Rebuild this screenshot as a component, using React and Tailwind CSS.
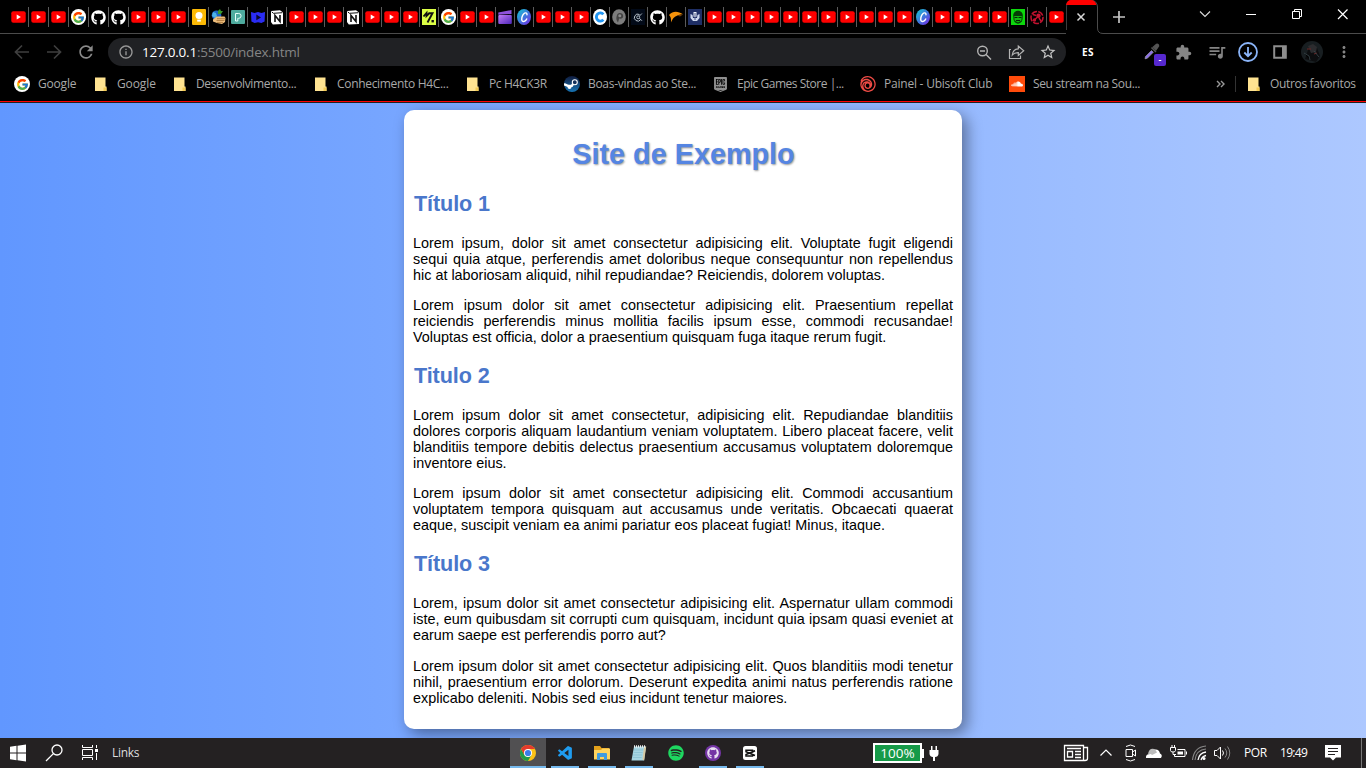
import React from "react";
import { FcGoogle } from "react-icons/fc";
import { FaGithub, FaSpotify, FaSoundcloud } from "react-icons/fa";
import { SiUbisoft, SiEpicgames } from "react-icons/si";
import { VscVscode } from "react-icons/vsc";
import { MdExtension, MdQueueMusic, MdRefresh, MdMoreVert, MdStarBorder, MdInfoOutline } from "react-icons/md";

/* ---------- Tab favicons ---------- */
const YouTube = () => (
  <svg width="15" height="12" viewBox="0 0 15 12">
    <rect x="0.3" y="0.3" width="14.4" height="11.4" rx="2" fill="#f00" />
    <path d="M5.7 3.6v4.8L9.9 6z" fill="#fff" />
  </svg>
);
const GoogleDisc = ({ big }) => (
  <span className={big ? "flex size-4 items-center justify-center rounded-full bg-white" : "flex h-4 w-[15px] items-center justify-center rounded-full bg-white"}>
    <FcGoogle size={13} />
  </span>
);
const GitHub = () => <FaGithub size={15} color="#fff" />;
const Keep = () => (
  <svg width="14" height="16" viewBox="0 0 14 16">
    <rect width="14" height="16" rx="1" fill="#fbb905" />
    <circle cx="7" cy="6.6" r="3.5" fill="#fff" />
    <rect x="5.2" y="10.6" width="3.6" height="2" fill="#fff" />
  </svg>
);
const GlobeHand = () => (
  <svg width="15" height="16" viewBox="0 0 15 16">
    <circle cx="5.5" cy="6.2" r="4.800" fill="#1f66c4" />
    <path d="M2 3l3 1 1 3-2 2-3-2z" fill="#4db3e8" />
    <path d="M7 2l2-2 1 2 2 0-2 3-3 0z" fill="#3b9a2b" />
    <path d="M2 10.500l3.500-3 8 0 1 1.500-.5 4-3 2-5-1-4-1.500z" fill="#edbd7c" />
    <path d="M6 9.700h8M5.500 11.500h8M6 13.400h6" stroke="#9a672d" strokeWidth=".7" />
  </svg>
);
const TealP = () => (
  <svg width="14" height="14" viewBox="0 0 14 14">
    <rect width="14" height="14" rx="1" fill="#4eab9e" />
    <path d="M4.5 3.500h3.200a2.400 2.400 0 010 4.800H6.800V11H4.500z" fill="none" stroke="#e6fffb" strokeWidth="1" />
  </svg>
);
const BluePlay = () => (
  <svg width="14" height="13" viewBox="0 0 14 13">
    <path d="M0 1l3.500 1L7 1l3.500 1L14 1l-.4 9.500L10.400 12 7 11.300 3.600 12 .4 10.500z" fill="#2a2cf3" />
    <path d="M5.3 3.600v5.600L10 6.400z" fill="#08082e" />
  </svg>
);
const Notion = () => (
  <svg width="14" height="15" viewBox="0 0 14 15">
    <path d="M1 1l9-.8 3 2.200V14l-10.200.6L1 12z" fill="#fff" />
    <path d="M1.7 1.800l1.700 1.500 9-.6" fill="none" stroke="#111" strokeWidth="1" />
    <path d="M5 12V5.500l5 6V5" fill="none" stroke="#111" strokeWidth="1.600" />
  </svg>
);
const Lime = () => (
  <svg width="14" height="16" viewBox="0 0 14 16">
    <rect width="14" height="16" fill="#dcff45" />
    <path d="M1.500 7.500L4.500 4v3L7 4.500M6.500 4.200h4L5.500 13.500" fill="none" stroke="#111" strokeWidth="1.900" />
    <rect x="9.500" y="11" width="2.400" height="2.400" fill="#111" />
  </svg>
);
const Clapper = () => (
  <svg width="14" height="14" viewBox="0 0 14 14">
    <defs><linearGradient id="clap" x1="0" y1="0" x2="1" y2="1"><stop stopColor="#c47cf8" /><stop offset="1" stopColor="#4d27b8" /></linearGradient></defs>
    <path d="M.3 2.500L13.500 0v4L.3 4.800z" fill="#8f52dc" />
    <rect x=".3" y="5" width="13.500" height="9" rx="1" fill="url(#clap)" />
  </svg>
);
const Canva = () => (
  <svg width="14" height="16" viewBox="0 0 14 16">
    <defs><linearGradient id="canva" x1="0" y1="0" x2="1" y2="1"><stop stopColor="#12cbd1" /><stop offset=".5" stopColor="#3f79dc" /><stop offset="1" stopColor="#7a24e8" /></linearGradient></defs>
    <ellipse cx="7" cy="8" rx="7" ry="8" fill="url(#canva)" />
    <path d="M10 5.800c.2-2-1.700-2.600-3.200-1C5 6.600 4 10.500 5.300 12c1.400 1.300 3.700-.3 4.400-2" fill="none" stroke="#fff" strokeWidth="1.400" strokeLinecap="round" />
  </svg>
);
const Coin = () => (
  <svg width="14" height="16" viewBox="0 0 14 16">
    <ellipse cx="7" cy="8" rx="7" ry="8" fill="#fff" />
    <path d="M10.300 5.400A3.900 4.100 0 1 0 10.300 10.600" fill="none" stroke="#2196f3" strokeWidth="2.900" />
  </svg>
);
const GrayMark = () => (
  <svg width="14" height="16" viewBox="0 0 14 16">
    <ellipse cx="7" cy="8" rx="6.800" ry="7.800" fill="#7c7c7c" />
    <path d="M6 13.500c-2-2-2-5-1-7.500 1.200-3 6.200-2.300 6.200 1 0 2.300-2 3-4 2.500z" fill="#424242" />
    <circle cx="7.800" cy="6.700" r="1.500" fill="#8a8a8a" />
  </svg>
);
const DarkOrbit = () => (
  <svg width="14" height="16" viewBox="0 0 14 16">
    <rect width="14" height="16" fill="#020a18" />
    <path d="M8.500 5.500A3.500 3.500 0 1 0 9.800 10.500" fill="none" stroke="#b9c4ce" strokeWidth="1" />
    <circle cx="7.200" cy="8.300" r="1.500" fill="none" stroke="#b9c4ce" strokeWidth=".9" />
    <path d="M8.300 7.200l2.600-2.700M8.500 9.300l2.500 2.500" stroke="#b9c4ce" strokeWidth=".9" />
  </svg>
);
const OrangeBird = () => (
  <svg width="14" height="12" viewBox="0 0 14 12">
    <path d="M0 4C4-.5 9 0 14 3.200c-3-.2-5 .8-8 2.600C3.600 7.500 3 9.500 2 11.500 2.200 8 2 6 0 4z" fill="#f5920b" />
    <path d="M8 4.600l6-1.200-3 2.200z" fill="#713c05" />
  </svg>
);
const NavyBadge = () => (
  <svg width="14" height="16" viewBox="0 0 14 16">
    <rect width="14" height="16" fill="#1f2f66" />
    <path d="M2.500 5v4l2.500 3h4l2.500-3V5l-2 1-.5 3H5L4.500 6z" fill="#cfd9ee" />
    <path d="M5.500 3h3v4.500l-1.500 1-1.500-1z" fill="#eef3fb" /><path d="M7 4v7" stroke="#1f2f66" strokeWidth=".8" />
  </svg>
);
const GreenFace = () => (
  <svg width="14" height="16" viewBox="0 0 14 16">
    <rect width="14" height="16" fill="#0dd80d" />
    <path d="M2.200 6.500C2.200 0 11.800 0 11.800 6.500l-.3 4C10.500 16 3.500 16 2.500 10.500z" fill="#053b05" />
    <path d="M3.200 7h7.600l-.4 4.500L7 13.500l-3.400-2z" fill="#0fb80f" />
    <path d="M3.500 8.500h3M7.500 8.500h3M5 11.500h4" stroke="#022102" strokeWidth="1.200" />
  </svg>
);
const RedRing = () => (
  <svg width="14" height="15" viewBox="0 0 14 15">
    <circle cx="7" cy="7.500" r="6" fill="none" stroke="#c0122f" strokeWidth="1.500" strokeDasharray="6 1.200" />
    <circle cx="8.500" cy="5.800" r="2.200" fill="#c4122f" /><circle cx="4.500" cy="10" r="1.700" fill="#c4122f" />
    <path d="M3 4.500l3 1M9 8l2 3M7.500 7l-3 3" stroke="#c4122f" strokeWidth="1.400" />
  </svg>
);

const ICONS = {
  y: YouTube, g: GoogleDisc, h: GitHub, k: Keep, w: GlobeHand, p: TealP, b: BluePlay, n: Notion, l: Lime,
  c: Clapper, v: Canva, o: Coin, m: GrayMark, d: DarkOrbit, a: OrangeBird, s: NavyBadge, f: GreenFace, r: RedRing,
};
const TABS = "yyyghhyyykwpbnyyynyyylgyycvyyyomdhasyyyyyyyyyyyvyyyyfry".split("");

function TabStrip() {
  return (
    <div className="flex h-[34px] items-start bg-black">
      <div className="flex h-[34px] w-[1066px] border-b border-[#4b4b4b] pt-[7px] pl-[9px]">
        {TABS.map((t, i) => {
          const Icon = ICONS[t];
          const width = i < 11 || i === 12 ? "w-5" : "w-[19px]";
          const line = i < TABS.length - 1 ? "border-r border-[#5b5b5b]" : "";
          return (
            <div key={i} className={`flex h-5 shrink-0 items-center justify-center ${width} ${line}`}>
              <Icon />
            </div>
          );
        })}
      </div>
      <svg width="38" height="34" viewBox="0 0 38 34" className="shrink-0">
        <path d="M.5 30V7Q.5 .5 5.500 .5" fill="none" stroke="#4b4b4b" strokeWidth=".8" />
        <path d="M25.500 .5Q31 .5 31.500 7V28Q31.500 33.500 37 33.500H38" fill="none" stroke="#4b4b4b" />
        <path d="M0 5Q1 0 5 0H25Q29 0 30.500 5z" fill="#f00" />
        <path d="M11.500 13.500l7 7M18.500 13.500l-7 7" stroke="#d8d8d8" strokeWidth="1.500" />
      </svg>
      <div className="flex h-[34px] flex-1 border-b border-[#4b4b4b]">
        <svg width="262" height="33" viewBox="0 0 262 33">
          <path d="M9 17h12M15 11v12" stroke="#c4c4c4" strokeWidth="1.700" />
          <path d="M96 11.500l5 5 5-5" fill="none" stroke="#ddd" strokeWidth="1.100" />
          <path d="M142 14.500h10" stroke="#fff" />
          <path d="M188.500 11.500h7v7h-7zM190.500 11v-1.500h7v7h-1.500" fill="none" stroke="#fff" />
          <path d="M234 9.500l9.500 9.500M243.500 9.500L234 19" stroke="#fff" strokeWidth="1.200" />
        </svg>
      </div>
    </div>
  );
}

function Toolbar() {
  return (
    <div className="flex h-9 items-center bg-black font-['Open_Sans','Noto_Sans',sans-serif]">
      <svg width="108" height="32" viewBox="0 0 108 32" className="shrink-0">
        <path d="M29 16H16M22 9.500L15.500 16l6.500 6.500M47 16h13M54 9.500l6.500 6.500-6.500 6.500" fill="none" stroke="#3f3f3f" strokeWidth="1.700" />
        <g transform="translate(76 6)"><MdRefresh size={20} color="#8a8a8a" /></g>
      </svg>
      <div className="flex h-7 w-[958px] items-center rounded-full bg-[#202124] pl-2.5">
        <MdInfoOutline size={16} color="#9a9a9a" />
        <span className="ml-2 w-[170px] text-[13.500px] tracking-[-0.23px] whitespace-nowrap text-[#858585]"><span className="text-white">127.0.0.1</span>:5500/index.html</span>
        <svg className="ml-auto" width="98" height="28" viewBox="0 0 98 28" fill="none" stroke="#b4b4b4" strokeWidth="1.400">
          <circle cx="14.500" cy="13" r="4.800" /><path d="M12 13h5M18.100 16.600l4.900 4.900" />
          <path d="M43 11.500H41.500V20.500H52.500V17.500M44.300 17c.4-4.200 2.500-6 6-6.200V8l5.400 4.700-5.400 4.700v-2.800c-2.800 0-4.500.5-6 2.400z" strokeWidth="1.200" />
          <g transform="translate(71 5)" stroke="none"><MdStarBorder size={18} color="#c4c4c4" /></g>
        </svg>
      </div>
      <div className="flex h-8 flex-1 items-center">
        <span className="w-[76px] pl-4 text-[10px] font-bold tracking-[0.3px] text-white">ES</span>
        <svg width="24" height="26" viewBox="0 0 24 26" className="mt-1">
          <path d="M3.500 15.500l6-6 1.800 1.800-6 6-2.300.5z" fill="#8b70e8" stroke="#aaa" strokeWidth=".6" />
          <path d="M9.500 6.500l4.500 4.500M11.500 6l3-2.500q2-.8 2 1.500l-2.500 3.500z" stroke="#555" strokeWidth="1.500" fill="#555" />
          <rect x="12" y="13" width="12" height="12" rx="2" fill="#5628cf" />
          <path d="M16.800 19.500h2.500" stroke="#fff" />
        </svg>
        <div className="ml-[9px] w-8"><MdExtension size={17} color="#858585" /></div>
        <div className="w-[31px]"><MdQueueMusic size={20} color="#858585" /></div>
        <svg width="20" height="20" viewBox="0 0 20 20" fill="none" stroke="#8ab4f8" strokeWidth="1.800">
          <circle cx="10" cy="10" r="9" /><path d="M10 5v9M6.300 10.500L10 14.200l3.700-3.700" />
        </svg>
        <svg className="ml-[15px]" width="14" height="14" viewBox="0 0 14 14"><path d="M1.200 1.200h11.600v11.600H1.200z" fill="none" stroke="#8d8d8d" strokeWidth="2" /><path d="M9 1h4v12H9z" fill="#8d8d8d" /></svg>
        <svg className="ml-[14px]" width="22" height="22" viewBox="0 0 22 22">
          <circle cx="11" cy="11" r="11" fill="#181e21" />
          <path d="M4 18l3-9 4-5 5 3 3 8-4 6z" fill="#0c0d0f" />
          <path d="M7 5l5-2 4 3-1 5-5 1z" fill="#2c2c2f" />
          <path d="M6 8h4M13 13l3-1" stroke="#6d2524" /><path d="M3 12l5 3 1 4M13 10l5 6" stroke="#3b494e" strokeWidth=".8" />
        </svg>
        <div className="ml-3"><MdMoreVert size={18} color="#858585" /></div>
      </div>
    </div>
  );
}

const Folder = () => (
  <svg width="13" height="15" viewBox="0 0 13 15"><path d="M1 .500h10.500v9h1v4.500H1z" fill="#ffe391" /><path d="M9.500 14v-3.500h3V14z" fill="#f3cb55" /></svg>
);
const SteamLogo = () => (
  <svg width="16" height="16" viewBox="0 0 16 16">
    <defs><linearGradient id="steam" x1="0" y1="0" x2="0" y2="1"><stop stopColor="#101b3d" /><stop offset="1" stopColor="#1674b5" /></linearGradient></defs>
    <circle cx="8" cy="8" r="8" fill="url(#steam)" />
    <path d="M0 8.200l4.500 1.800 3.300-.2 2-3" fill="none" stroke="#fff" strokeWidth="2.400" />
    <circle cx="10.800" cy="6.200" r="2.500" fill="#13315c" stroke="#fff" strokeWidth="1.100" />
    <circle cx="5.500" cy="11" r="2" fill="#fff" />
  </svg>
);
const Epic = () => <SiEpicgames size={15} color="#8f8f8f" />;
const Ubi = () => <SiUbisoft size={16} color="#ee4b45" />;
const Sound = () => <span className="flex size-4 items-center justify-center bg-[#ff4b0b]"><FaSoundcloud size={12} color="#fff" /></span>;

const BOOKMARKS = [
  [() => <GoogleDisc big />, "Google", "w-[80px]", "tracking-[-0.2px]"],
  [Folder, "Google", "w-[79px]", "tracking-[-0.1px]"],
  [Folder, "Desenvolvimento...", "w-[141px]", "tracking-[-0.35px]"],
  [Folder, "Conhecimento H4C...", "w-[152px]", "tracking-[-0.32px]"],
  [Folder, "Pc H4CK3R", "w-[98px]", "tracking-[-0.35px]"],
  [SteamLogo, "Boas-vindas ao Ste...", "w-[149px]", "tracking-[-0.3px]"],
  [Epic, "Epic Games Store |...", "w-[147px]", "tracking-[-0.48px]"],
  [Ubi, "Painel - Ubisoft Club", "w-[149px]", "tracking-[-0.22px]"],
  [Sound, "Seu stream na Sou...", "w-[201px]", "tracking-[-0.35px]"],
];

function Bookmark({ Icon, label, width, tracking }) {
  const slot = Icon === Folder ? "w-[23px]" : "w-6";
  return (
    <div className={`flex shrink-0 items-center whitespace-nowrap ${width}`}>
      <span className={`flex justify-start ${slot}`}><Icon /></span>
      <span className={`text-[12px] text-[#a9a9a9] ${tracking}`}>{label}</span>
    </div>
  );
}

function Bookmarks() {
  return (
    <div className="flex h-8 items-center border-b border-[#222] bg-black font-['Open_Sans','Noto_Sans',sans-serif]">
      <div className="flex h-[31px] w-full items-center border-b border-[#f00] pb-1 pl-3.5">
        {BOOKMARKS.map(([Icon, label, width, tracking], i) => (
          <Bookmark key={i} Icon={Icon} label={label} width={width} tracking={tracking} />
        ))}
        <svg width="37" height="18" viewBox="0 0 37 18" className="shrink-0" fill="none">
          <path d="M7 6l3 3-3 3M11 6l3 3-3 3" stroke="#999" strokeWidth="1.400" />
          <path d="M25.500 1v16" stroke="#333" />
        </svg>
        <Bookmark Icon={Folder} label="Outros favoritos" width="w-[115px]" tracking="tracking-[-0.33px]" />
      </div>
    </div>
  );
}

/* ---------- Page ---------- */
const SECTIONS = [
  ["Título 1", "gap-[14px]",
    ["Lorem ipsum, dolor sit amet consectetur adipisicing elit. Voluptate fugit eligendi", "sequi quia atque, perferendis amet doloribus neque consequuntur non repellendus", "hic at laboriosam aliquid, nihil repudiandae? Reiciendis, dolorem voluptas."],
    ["Lorem ipsum dolor sit amet consectetur adipisicing elit. Praesentium repellat", "reiciendis perferendis minus mollitia facilis ipsum esse, commodi recusandae!", "Voluptas est officia, dolor a praesentium quisquam fuga itaque rerum fugit."]],
  ["Titulo 2", "gap-[14px]",
    ["Lorem ipsum dolor sit amet consectetur, adipisicing elit. Repudiandae blanditiis", "dolores corporis aliquam laudantium veniam voluptatem. Libero placeat facere, velit", "blanditiis tempore debitis delectus praesentium accusamus voluptatem doloremque", "inventore eius."],
    ["Lorem ipsum dolor sit amet consectetur adipisicing elit. Commodi accusantium", "voluptatem tempora quisquam aut accusamus unde veritatis. Obcaecati quaerat", "eaque, suscipit veniam ea animi pariatur eos placeat fugiat! Minus, itaque."]],
  ["Título 3", "gap-[15px]",
    ["Lorem, ipsum dolor sit amet consectetur adipisicing elit. Aspernatur ullam commodi", "iste, eum quibusdam sit corrupti cum quisquam, incidunt quia ipsam quasi eveniet at", "earum saepe est perferendis porro aut?"],
    ["Lorem ipsum dolor sit amet consectetur adipisicing elit. Quos blanditiis modi tenetur", "nihil, praesentium error dolorum. Deserunt expedita animi natus perferendis ratione", "explicabo deleniti. Nobis sed eius incidunt tenetur maiores."]],
];

function Page() {
  return (
    <main className="flex h-[635px] justify-center overflow-hidden bg-linear-to-r from-[#6197ff] to-[#adc8ff] pt-[7px] font-['Liberation_Sans',Arial,sans-serif]">
      <article className="h-[619px] w-[558px] rounded-[10px] bg-white px-[9px] pt-[27px] shadow-[5px_5px_15px_rgba(0,0,0,0.4)]">
        <h1 className="h-9 pl-px text-center text-[28.800px] leading-[34px] font-bold text-[#5585e2] [text-shadow:1px_1px_2px_rgba(0,0,0,0.4)]">Site de Exemplo</h1>
        {SECTIONS.map(([title, gap, ...paragraphs]) => (
          <section key={title}>
            <h2 className="h-[62px] pt-[18px] pl-px text-[21.600px] leading-[25px] font-bold tracking-[-0.1px] text-[#4a77cb]">{title}</h2>
            <div className={`flex flex-col text-[14.400px] leading-4 text-black ${gap}`}>
              {paragraphs.map((lines, i) => (
                <p key={i}>
                  {lines.map((line, j) => (
                    <span key={j} className={j < lines.length - 1 ? "block whitespace-nowrap [text-align-last:justify]" : "block whitespace-nowrap"}>{line}</span>
                  ))}
                </p>
              ))}
            </div>
          </section>
        ))}
      </article>
    </main>
  );
}

/* ---------- Taskbar ---------- */
const Chrome = () => (
  <svg width="16" height="16" viewBox="0 0 16 16">
    <circle cx="8" cy="8" r="8" fill="#fbc116" />
    <path d="M1.070 4A8 8 0 008 16l3.500-6L8 8 4.500 10z" fill="#229a48" />
    <path d="M1.070 4A8 8 0 0114.930 4H8L4.500 10z" fill="#e33b2e" />
    <circle cx="8" cy="8" r="4" fill="#fff" /><circle cx="8" cy="8" r="3.100" fill="#3b7de9" />
  </svg>
);
const Explorer = () => (
  <svg width="16" height="14" viewBox="0 0 16 14">
    <path d="M0 0h6l1.500 2H15v4H0z" fill="#e4a11b" /><path d="M0 4h7l1.500-1.500H16V13.500H0z" fill="#ffd45e" />
    <path d="M3 14V8q0-1 1-1h8q1 0 1 1v6h-3v-3H6v3z" fill="#3f9be0" />
  </svg>
);
const Notepad = () => (
  <svg width="16" height="16" viewBox="0 0 16 16">
    <path d="M3 1.500h12l-2 14H.500z" fill="#a7d5e2" /><path d="M13 2l2.200-.5-2 14-1.700-1z" fill="#d6c9a3" />
    <path d="M3 5h9M2.500 7.500h9M2 10h9M1.600 12.500h9" stroke="#86bfd0" strokeWidth=".7" />
    <path d="M3 1.500h12" stroke="#eee" strokeWidth="2.500" strokeDasharray="1 1" />
  </svg>
);
const Desktop = () => <span className="flex size-4 items-center justify-center rounded-full bg-[#7435a5]"><FaGithub size={12} color="#e9def2" /></span>;
const CapCut = () => (
  <svg width="14" height="14" viewBox="0 0 14 14">
    <rect width="14" height="14" rx="2.500" fill="#fff" />
    <path d="M12 4.800L9.500 6V4.200H3v1.500l9 3.800M12 4.800L3 8.600v1.300h6.500V8.200" fill="none" stroke="#111" strokeWidth="1.500" />
  </svg>
);
const APPS = [
  [Chrome, "bg-[#515052]", "w-9 border-[#76b9ed]"],
  [() => <VscVscode size={17} color="#1f9cf0" />, "", "w-7 border-[#76b9ed]"],
  [Explorer, "", "w-7 border-[#76b9ed]"],
  [Notepad, "", "w-7 border-[#76b9ed]"],
  [() => <FaSpotify size={16} color="#1ed760" />, "", "w-7 border-transparent"],
  [Desktop, "", "w-7 border-[#76b9ed]"],
  [CapCut, "", "w-7 border-[#76b9ed]"],
];

function Taskbar() {
  return (
    <footer className="flex h-[30px] items-center bg-[#242122] font-['Open_Sans','Noto_Sans',sans-serif] text-[12px] text-white">
      <div className="flex w-[510px] items-center">
        <svg width="111" height="30" viewBox="0 0 111 30" fill="none" stroke="#fff">
          <path d="M10 8.700l6.500-.9v6.700H10zM17.500 7.700L26 6.500v8h-8.500zM10 15.500h6.500v6.700l-6.500-.9zM17.500 15.500H26v8l-8.500-1.200z" fill="#fff" stroke="none" />
          <circle cx="57" cy="12" r="5" strokeWidth="1.300" /><path d="M53.400 15.600L46 23" strokeWidth="1.300" />
          <path d="M82.500 7v2.500h10V7M82.500 22v-2.500h10V22M82.500 11.500h10v6h-10zM96.500 7v3M96.500 15v7" /><path d="M95 11h3v3h-3z" fill="#fff" stroke="none" />
        </svg>
        <span className="ml-px tracking-[-0.3px] text-[#dedede]">Links</span>
      </div>
      <div className="flex w-[363px]">
        {APPS.map(([Icon, bg, bar], i) => (
          <div key={i} className={`mr-px flex h-[30px] w-9 flex-col items-center ${bg}`}>
            <span className="flex h-7 items-center pt-[2px]"><Icon /></span>
            <span className={`border-b-2 ${bar}`} />
          </div>
        ))}
      </div>
      <div className="flex h-5 w-[49px] items-center justify-center border-2 border-white bg-[#169a48] text-[13.500px]">100%</div>
      <svg width="138" height="30" viewBox="0 0 138 30"><path d="M0 11h2v9H0zM9 8h1.500v4h3V8H15v4h1.500v4q-.5 3-3.500 3v4h-2v-4q-3 0-3.500-3v-4H9z" fill="#fff" /></svg>
      <svg width="184" height="30" viewBox="0 0 184 30" fill="none" stroke="#fff">
        <path d="M4.500 7.500h19v15h-19zM23.500 9.500h4v11q0 2-2.500 2h-2" strokeWidth="1.300" /><path d="M7 10.500h14M15 13.500h6M15 16.500h6M15 19.500h6M7.500 13.500h5v5.500h-5z" strokeWidth="1.300" />
        <path d="M40.500 17.500l5.500-5.500 5.500 5.500" strokeWidth="1.200" />
        <path d="M66 8.500Q70.500 5.500 75 8.500M66 21.500Q70.500 24.500 75 21.500M66 11.500h6.500v7H66zM72.500 14l3-2v6l-3-2" />
        <path d="M86 20q-.5-4 4-4 1-5 5-4.500Q99 11 100 15.500 103 17 101 20z" fill="#fff" stroke="none" /><path d="M88 16.500q3-1 4 .5l5-2.500q-2-5-6-3.500-2.500 1-3 5.500z" fill="#bbb" stroke="none" />
        <path d="M117.500 11.500h7.500v7h-10.500v-2M126.500 13.500v3" /><path d="M117.500 13.500h5.500v3h-5.500z" fill="#fff" stroke="none" />
        <path d="M110.500 9.500h5v3q0 1.500-2.500 1.500t-2.500-1.500zM112 9V7M114.500 9V7M113 14v2.500h3" />
        <path d="M141 22q1-3.500 5-4.500M138 22q1-7 8-8" strokeWidth="1.300" /><path d="M135 22q1-10 11-11M132.500 22Q134 9 146 8" stroke="#888" strokeWidth="1.100" /><circle cx="144" cy="20.500" r="1.500" fill="#fff" stroke="none" />
        <path d="M154.500 12.500h2.500l3.500-3.500v12l-3.500-3.500h-2.500z" /><path d="M162.500 12.500q2 2.500 0 5" /><path d="M165 10.500q3.500 4.500 0 9M167.500 8.500q4.500 6.500 0 13" stroke="#888" />
      </svg>
      <span className="w-[36px] text-[12px] tracking-[-0.4px]">POR</span>
      <span className="w-[45px] text-[12px] tracking-[-0.7px]">19:49</span>
      <svg width="41" height="30" viewBox="0 0 41 30"><path d="M0 7h16v12.500h-5L8 22.500 5 19.500H0z" fill="#fff" /><path d="M3 10.500h10M3 13.500h10M3 16.500h7" stroke="#242122" /><path d="M36.500 0v30" stroke="#777" /></svg>
    </footer>
  );
}

export default function App() {
  return (
    <div className="flex h-[768px] w-[1366px] flex-col overflow-hidden bg-black">
      <TabStrip />
      <Toolbar />
      <div className="h-px bg-black" />
      <Bookmarks />
      <Page />
      <Taskbar />
    </div>
  );
}
